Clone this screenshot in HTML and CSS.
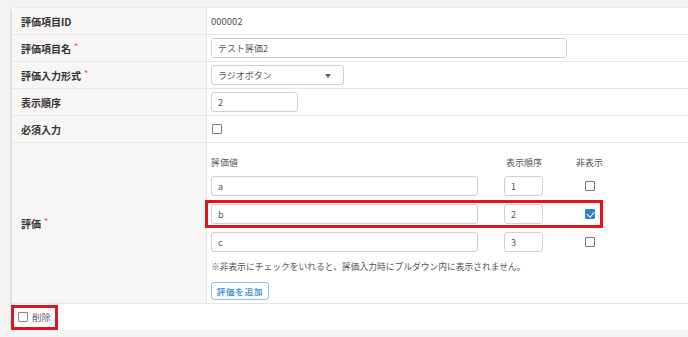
FILE: index.html
```html
<!DOCTYPE html>
<html lang="ja">
<head>
    <meta charset="UTF-8">
    <meta name="viewport" content="width=device-width, initial-scale=1.0">
    <title>評価項目編集</title>
    <link rel="stylesheet" href="styles.css">
</head>
<body>
<div class="card">
    <div class="row">
        <div class="label">評価項目ID</div>
        <div class="value"><span class="plain">000002</span></div>
    </div>
    <div class="row">
        <div class="label">評価項目名<span class="req">*</span></div>
        <div class="value"><div class="input w-name">テスト評価2</div></div>
    </div>
    <div class="row">
        <div class="label">評価入力形式<span class="req">*</span></div>
        <div class="value">
            <div class="input select">ラジオボタン<span class="caret"></span></div>
        </div>
    </div>
    <div class="row">
        <div class="label">表示順序</div>
        <div class="value"><div class="input w-order">2</div></div>
    </div>
    <div class="row">
        <div class="label">必須入力</div>
        <div class="value"><span class="check"></span></div>
    </div>
    <div class="row tall">
        <div class="label">評価<span class="req">*</span></div>
        <div class="value eval">
            <div class="eval-head">
                <span class="col-text">評価値</span>
                <span class="col-order">表示順序</span>
                <span class="col-hide">非表示</span>
            </div>
            <div class="eval-row">
                <div class="input col-text">a</div>
                <div class="input col-order">1</div>
                <div class="col-hide"><span class="check"></span></div>
            </div>
            <div class="eval-row">
                <div class="input col-text">b</div>
                <div class="input col-order">2</div>
                <div class="col-hide"><span class="check checked"></span></div>
                <div class="mark mark-row"></div>
            </div>
            <div class="eval-row">
                <div class="input col-text">c</div>
                <div class="input col-order">3</div>
                <div class="col-hide"><span class="check"></span></div>
            </div>
            <p class="note">※非表示にチェックをいれると、評価入力時にプルダウン内に表示されません。</p>
            <button class="btn-add">評価を追加</button>
        </div>
    </div>
    <div class="footer">
        <span class="check"></span>
        <span class="del">削除</span>
        <div class="mark mark-del"></div>
    </div>
</div>
</body>
</html>
```

FILE: styles.css
```css
body {
    margin: 0;
    padding: 8px 0 0 12px;
    background: #f4f3f1;
    font-family: "Noto Sans CJK JP", "Noto Sans", sans-serif;
    font-size: 10px;
    color: #333;
    overflow: hidden;
}

.card {
    width: 690px;
    background: #fff;
    border-radius: 3px 0 0 3px;
    box-shadow: 0 1px 3px rgba(0, 0, 0, 0.3);
}

.row {
    display: flex;
    height: 26px;
    border-bottom: 1px solid #e6e5e3;
}

.row.tall {
    height: 160px;
}

.label {
    width: 185px;
    flex: none;
    padding-left: 9px;
    background: #f7f6f4;
    border-right: 1px solid #e6e5e3;
    display: flex;
    align-items: center;
    font-weight: bold;
    color: #333;
}

.req {
    color: #e0505a;
    font-size: 9px;
    margin-left: 3px;
    font-weight: normal;
    position: relative;
    top: -2px;
}

.value {
    flex: 1;
    padding-left: 4px;
    display: flex;
    align-items: center;
    color: #555;
}

.plain {
    color: #555;
    font-size: 9.5px;
}

.input {
    box-sizing: border-box;
    height: 20px;
    border: 1px solid #cfcfcf;
    border-radius: 3px;
    padding: 0 6px;
    display: flex;
    align-items: center;
    color: #555;
    background: #fff;
    font-size: 9px;
}

.w-name {
    width: 356px;
}

.w-order {
    width: 87px;
}

.select {
    width: 133px;
    position: relative;
}

.caret {
    position: absolute;
    right: 12px;
    top: 8px;
    border-left: 3.5px solid transparent;
    border-right: 3.5px solid transparent;
    border-top: 4px solid #555;
}

.check {
    box-sizing: border-box;
    display: inline-block;
    width: 10px;
    height: 10px;
    border: 1px solid #777;
    border-radius: 1px;
    background: #fff;
    position: relative;
}

.check.checked {
    background: #2b7fd4;
    border-color: #2b7fd4;
}

.check.checked::after {
    content: "";
    position: absolute;
    left: 2px;
    top: 0px;
    width: 4px;
    height: 6px;
    border-right: 1.5px solid #fff;
    border-bottom: 1.5px solid #fff;
    transform: rotate(40deg);
}

.value .check {
    margin-left: 1px;
}

.eval {
    flex-direction: column;
    align-items: flex-start;
    padding-top: 11px;
}

.eval-head,
.eval-row {
    display: flex;
    align-items: center;
}

.eval-head {
    height: 16px;
    margin-bottom: 6px;
    color: #555;
    font-size: 9px;
    white-space: nowrap;
}

.eval-row {
    position: relative;
    margin-bottom: 8px;
}

.col-text {
    width: 267px;
}

.col-order {
    width: 39px;
    margin-left: 26px;
}

.eval-head .col-order {
    margin-left: 28px;
    width: 37px;
}

.col-hide {
    width: 27px;
    margin-left: 33px;
    display: flex;
    justify-content: center;
}

.eval-row .col-hide .check {
    margin-left: 0;
}

.note {
    margin: 0;
    height: 14px;
    line-height: 14px;
    color: #555;
    font-size: 8.75px;
    white-space: nowrap;
}

.btn-add {
    margin-top: 8px;
    height: 18px;
    width: 58px;
    padding: 0;
    border: 1px solid #8bbde6;
    border-radius: 3px;
    background: #fff;
    color: #4a95d6;
    font-family: inherit;
    font-size: 8.5px;
    font-weight: bold;
    letter-spacing: 0.8px;
}

.footer {
    height: 26px;
    display: flex;
    align-items: center;
    padding-left: 6px;
    position: relative;
}

.footer .check {
    border-color: #888;
}

.del {
    margin-left: 4px;
    color: #666;
    font-size: 9.5px;
}

.mark {
    position: absolute;
    box-sizing: border-box;
    border: 3px solid #e3121d;
}

.mark-row {
    left: -6px;
    top: -4px;
    width: 398px;
    height: 28px;
}

.mark-del {
    left: -1px;
    top: 1px;
    width: 47px;
    height: 25px;
}
```
